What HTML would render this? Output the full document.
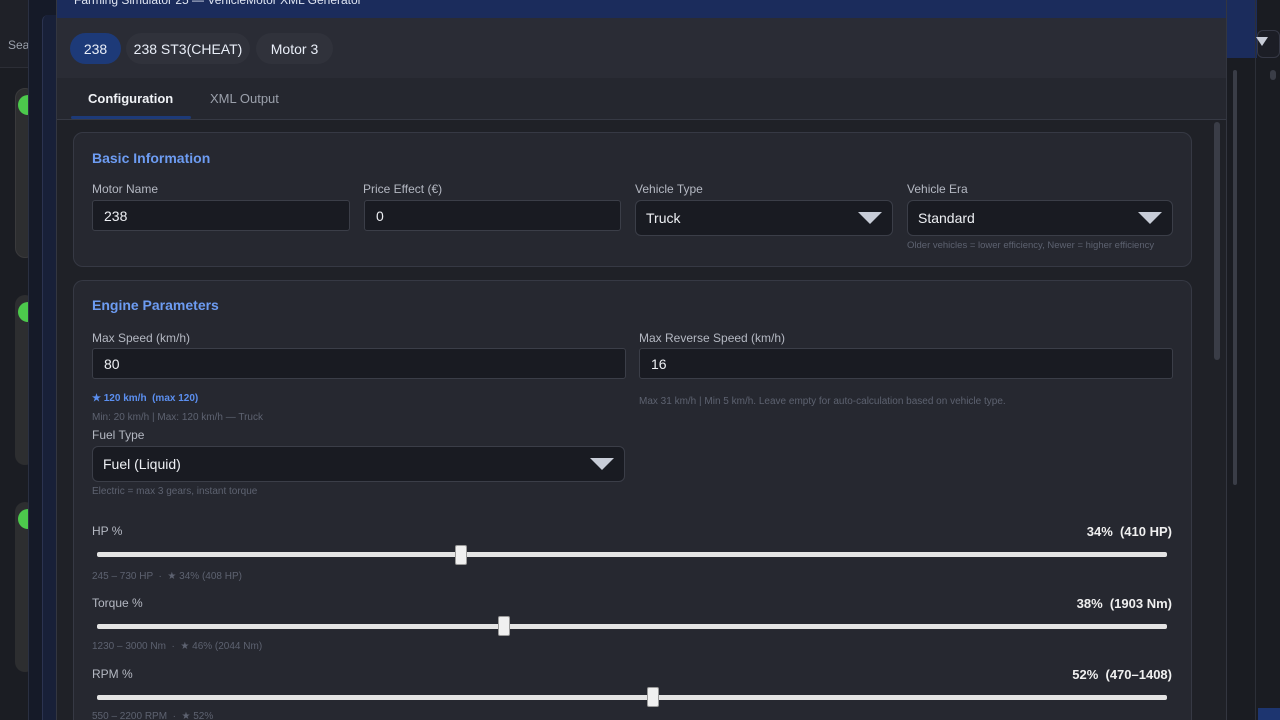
<!DOCTYPE html>
<html style="width:1280px;height:720px;overflow:hidden"><head><meta charset="utf-8"><style>
*{box-sizing:border-box;margin:0;padding:0}
body{width:1280px;height:720px;overflow:hidden;background:#1b1d23;font-family:"Liberation Sans",sans-serif;position:relative;color:#e6e8ee}
.a{position:absolute}
.lbl{position:absolute;font-size:12px;color:#b4b8c2}
.inp{position:absolute;background:#191b22;border:1px solid #3b3e48;border-radius:3px;font-size:14px;color:#eef0f4;padding-left:11px;display:flex;align-items:center}
.sel{position:absolute;background:#191b22;border:1px solid #3b3e48;border-radius:6px;font-size:14px;color:#eef0f4;padding-left:10px;display:flex;align-items:center}
.tri{position:absolute;right:10px;top:50%;margin-top:-6px;width:0;height:0;border-left:12px solid transparent;border-right:12px solid transparent;border-top:12px solid #c8cdd8}
.hint{position:absolute;font-size:10px;color:#5d6270}
.card{position:absolute;background:#262830;border:1px solid #363944;border-radius:10px}
.ttl{position:absolute;font-size:14px;font-weight:bold;color:#6d9cf2}
.track{position:absolute;left:97px;width:1070px;height:5px;background:#e4e4e4;border-radius:2px}
.thumb{position:absolute;width:12px;height:20px;background:#f0f0f0;border:1px solid #9a9a9a;border-radius:2px}
.val{position:absolute;right:108px;font-size:13px;font-weight:bold;color:#f0f0f0}
</style></head><body>
<div class="a" style="left:0;top:0;width:1280px;height:68px;background:#1f2128;border-bottom:1px solid #2c2e36"></div>
<div class="a" style="left:8px;top:38px;font-size:12px;color:#9aa0ab">Sea</div>
<div class="a" style="left:15px;top:88px;width:20px;height:170px;background:#2d2e30;border-radius:10px;border:1px solid #3a3a3c"></div>
<div class="a" style="left:15px;top:295px;width:20px;height:170px;background:#2d2e30;border-radius:10px"></div>
<div class="a" style="left:15px;top:502px;width:20px;height:170px;background:#2d2e30;border-radius:10px"></div>
<div class="a" style="left:18px;top:95px;width:12px;height:20px;background:#4cc94c;border-radius:10px 0 0 10px"></div>
<div class="a" style="left:18px;top:302px;width:12px;height:20px;background:#4cc94c;border-radius:10px 0 0 10px"></div>
<div class="a" style="left:18px;top:509px;width:12px;height:20px;background:#4cc94c;border-radius:10px 0 0 10px"></div>
<div class="a" style="left:28px;top:0;width:28px;height:720px;background:#151a28;border-left:1px solid #2a3042"></div>
<div class="a" style="left:42px;top:15px;width:14px;height:705px;background:#182038;border-left:1px solid #2b3350;border-radius:6px 0 0 0"></div>
<div class="a" style="left:1227px;top:0;width:53px;height:720px;background:#1a1c22"></div>
<div class="a" style="left:1227px;top:0;width:30px;height:58px;background:#1b2c5c"></div>
<div class="a" style="left:1257px;top:30px;width:23px;height:28px;background:#1c1e26;border:1px solid #353845;border-radius:6px"></div>
<div class="a" style="left:1256px;top:37px;width:0;height:0;border-left:6px solid transparent;border-right:6px solid transparent;border-top:9px solid #c8cdd8"></div>
<div class="a" style="left:1233px;top:70px;width:4px;height:415px;background:#3a3d47;border-radius:2px"></div>
<div class="a" style="left:1255px;top:0;width:1px;height:720px;background:#2c2f38"></div>
<div class="a" style="left:1270px;top:70px;width:6px;height:10px;background:#3a3d47;border-radius:3px"></div>
<div class="a" style="left:1258px;top:708px;width:22px;height:12px;background:#1d3570"></div>
<div class="a" style="left:56px;top:0;width:1171px;height:720px;background:#1f2127;border-left:1px solid #333640;border-right:1px solid #333640"></div>
<div class="a" style="left:57px;top:0;width:1169px;height:18px;background:#1b2c5c"></div>
<div class="a" style="left:74px;top:-7px;font-size:12px;color:#dfe5f2">Farming Simulator 25 — VehicleMotor XML Generator</div>
<div class="a" style="left:57px;top:18px;width:1169px;height:60px;background:#2a2c35"></div>
<div class="a" style="left:70px;top:33px;width:51px;height:31px;background:#1d3a78;border-radius:16px;font-size:14px;color:#e9eef8;display:flex;align-items:center;justify-content:center">238</div>
<div class="a" style="left:126px;top:33px;width:124px;height:31px;background:#30323b;border-radius:16px;font-size:14px;color:#e9eef8;display:flex;align-items:center;justify-content:center">238 ST3(CHEAT)</div>
<div class="a" style="left:256px;top:33px;width:77px;height:31px;background:#30323b;border-radius:16px;font-size:14px;color:#e9eef8;display:flex;align-items:center;justify-content:center">Motor 3</div>
<div class="a" style="left:57px;top:78px;width:1169px;height:42px;background:#25272f;border-bottom:1px solid #363944"></div>
<div class="a" style="left:88px;top:91px;font-size:13px;font-weight:bold;color:#f0f2f6">Configuration</div>
<div class="a" style="left:71px;top:116px;width:120px;height:3px;background:#1d3a78;border-radius:2px"></div>
<div class="a" style="left:210px;top:91px;font-size:13px;color:#9ba0ab">XML Output</div>
<div class="a" style="left:1214px;top:122px;width:6px;height:238px;background:#3a3d47;border-radius:3px"></div>

<div class="card" style="left:73px;top:132px;width:1119px;height:135px"></div>
<div class="ttl" style="left:92px;top:150px">Basic Information</div>
<div class="lbl" style="left:92px;top:182px">Motor Name</div>
<div class="inp" style="left:92px;top:200px;width:258px;height:31px">238</div>
<div class="lbl" style="left:363px;top:182px">Price Effect (€)</div>
<div class="inp" style="left:364px;top:200px;width:257px;height:31px">0</div>
<div class="lbl" style="left:635px;top:182px">Vehicle Type</div>
<div class="sel" style="left:635px;top:200px;width:258px;height:36px">Truck<div class="tri"></div></div>
<div class="lbl" style="left:907px;top:182px">Vehicle Era</div>
<div class="sel" style="left:907px;top:200px;width:266px;height:36px">Standard<div class="tri"></div></div>
<div class="hint" style="left:907px;top:240px;font-size:9.5px">Older vehicles = lower efficiency, Newer = higher efficiency</div>

<div class="card" style="left:73px;top:280px;width:1119px;height:440px;border-bottom:none;border-radius:10px 10px 0 0"></div>
<div class="ttl" style="left:92px;top:297px">Engine Parameters</div>
<div class="lbl" style="left:92px;top:331px">Max Speed (km/h)</div>
<div class="inp" style="left:92px;top:348px;width:534px;height:31px">80</div>
<div class="lbl" style="left:639px;top:331px">Max Reverse Speed (km/h)</div>
<div class="inp" style="left:639px;top:348px;width:534px;height:31px">16</div>
<div class="a" style="left:92px;top:393px;font-size:10px;font-weight:bold;color:#5b8ff0">★ 120 km/h&nbsp; (max 120)</div>
<div class="hint" style="left:92px;top:412px">Min: 20 km/h | Max: 120 km/h — Truck</div>
<div class="hint" style="left:639px;top:396px">Max 31 km/h | Min 5 km/h. Leave empty for auto-calculation based on vehicle type.</div>
<div class="lbl" style="left:92px;top:428px">Fuel Type</div>
<div class="sel" style="left:92px;top:446px;width:533px;height:36px">Fuel (Liquid)<div class="tri"></div></div>
<div class="hint" style="left:92px;top:486px">Electric = max 3 gears, instant torque</div>

<div class="lbl" style="left:92px;top:524px">HP %</div>
<div class="val" style="top:524px">34%&nbsp; (410 HP)</div>
<div class="track" style="top:552px"></div>
<div class="thumb" style="left:455px;top:545px"></div>
<div class="hint" style="left:92px;top:571px">245 – 730 HP &nbsp;·&nbsp; ★ 34% (408 HP)</div>

<div class="lbl" style="left:92px;top:596px">Torque %</div>
<div class="val" style="top:596px">38%&nbsp; (1903 Nm)</div>
<div class="track" style="top:624px"></div>
<div class="thumb" style="left:498px;top:616px"></div>
<div class="hint" style="left:92px;top:641px">1230 – 3000 Nm &nbsp;·&nbsp; ★ 46% (2044 Nm)</div>

<div class="lbl" style="left:92px;top:667px">RPM %</div>
<div class="val" style="top:667px">52%&nbsp; (470–1408)</div>
<div class="track" style="top:695px"></div>
<div class="thumb" style="left:647px;top:687px"></div>
<div class="hint" style="left:92px;top:711px">550 – 2200 RPM &nbsp;·&nbsp; ★ 52%</div>
</body></html>
